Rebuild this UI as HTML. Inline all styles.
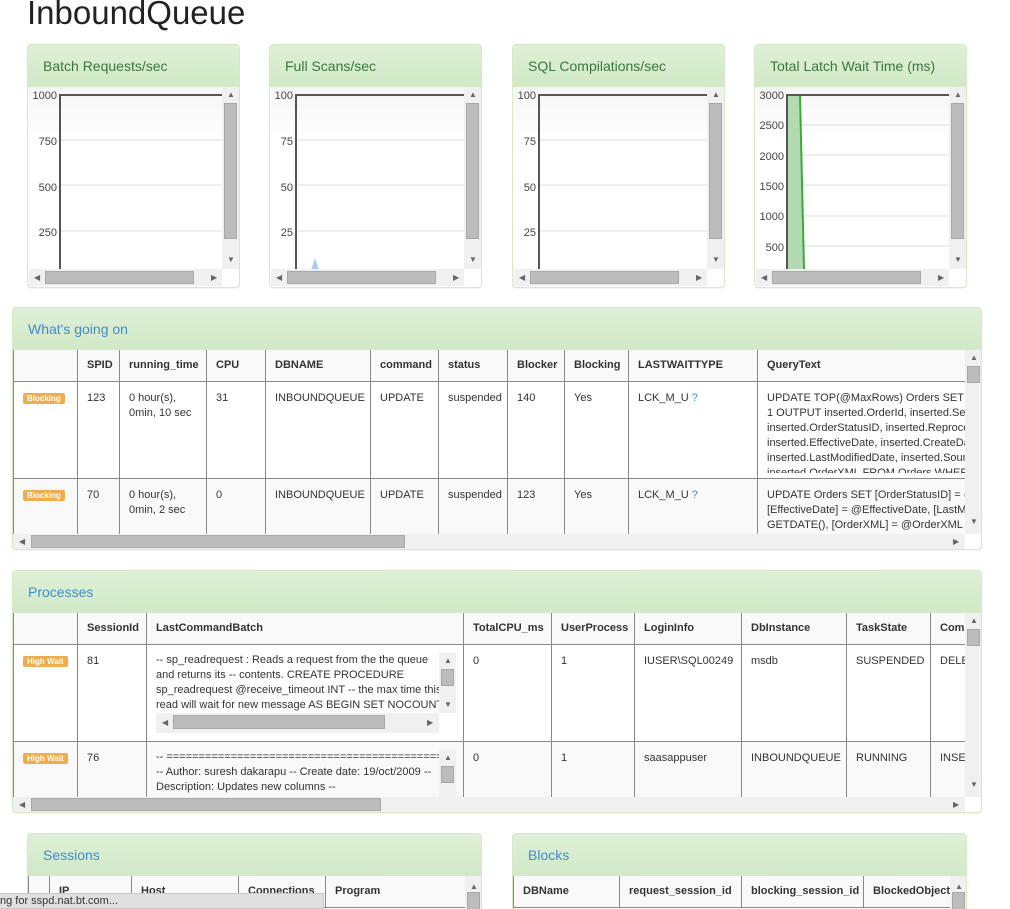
<!DOCTYPE html>
<html><head><meta charset="utf-8">
<style>
*{box-sizing:border-box;margin:0;padding:0}
html{height:909px;overflow:hidden}
body{width:1010px;height:909px;overflow:hidden;background:#fff;font-family:"Liberation Sans",Arial,sans-serif;color:#333;position:relative}
.abs{position:absolute}
h1{position:absolute;left:27px;top:-6px;font-size:33px;font-weight:normal;color:#222}
.panel{position:absolute;border:1px solid #d6e9c6;border-radius:4px;background:#fff;overflow:hidden;box-shadow:0 1px 1px rgba(0,0,0,.05)}
.ph{position:absolute;left:0;right:0;top:0;background:linear-gradient(#dff0d8,#d0e9c6);border-bottom:1px solid #d6e9c6;font-size:14px;padding-left:15px}
.ph.g{color:#3c763d}
.ph.b{color:#428bca}
.sb{position:absolute;background:#f0f0f0}
.th{position:absolute;background:#bcbcbc;border:1px solid #a8a8a8}
.ar{position:absolute;font-size:8px;color:#666;line-height:8px}
table{border-collapse:collapse;table-layout:fixed;font-size:11px;position:absolute;left:0;top:-1px}
td,th{border:1px solid #888;padding:0 9px;vertical-align:top;text-align:left;overflow:hidden;white-space:normal;line-height:15px}
th{font-weight:bold;height:32px;vertical-align:middle;background:#f9f9f9}
tr.r1 td{background:#fff;padding-top:9px}
tr.r2 td{background:#f9f9f9;padding-top:9px}
.lbl{display:inline-block;background:#f0ad4e;color:#fff;font-size:8px;font-weight:bold;padding:1px 4px;border-radius:2px;line-height:9px;margin-top:-4px;margin-left:0}
.q{color:#428bca}
</style></head><body>
<h1>InboundQueue</h1>

<div class="panel" style="left:27px;top:44px;width:213px;height:244px">
 <div class="ph g" style="height:42px;line-height:42px">Batch Requests/sec</div>
 <svg class="abs" style="left:1px;top:42px" width="194" height="183">
  <defs><linearGradient id="bg" x1="0" y1="0" x2="0" y2="1"><stop offset="0" stop-color="#f5f5f5"/><stop offset=".3" stop-color="#fff"/></linearGradient></defs>
  <rect width="194" height="183" fill="url(#bg)"/>
  <g stroke="#ddd"><line x1="31" y1="98" x2="194" y2="98"/><line x1="31" y1="144" x2="194" y2="144"/><line x1="31" y1="189" x2="194" y2="189"/><line x1="31" y1="53" x2="194" y2="53"/></g>
  <path d="M31 183V8H194" fill="none" stroke="#555" stroke-width="2"/>
  <g font-size="11" fill="#444" text-anchor="end" font-family="Liberation Sans"><text x="28" y="12">1000</text><text x="28" y="58">750</text><text x="28" y="104">500</text><text x="28" y="149">250</text></g>
 </svg>
</div>
<div class="panel" style="left:269px;top:44px;width:213px;height:244px">
 <div class="ph g" style="height:42px;line-height:42px">Full Scans/sec</div>
 <svg class="abs" style="left:1px;top:42px" width="194" height="183">
  <rect width="194" height="183" fill="url(#bg)"/>
  <g stroke="#ddd"><line x1="25" y1="53" x2="194" y2="53"/><line x1="25" y1="98" x2="194" y2="98"/><line x1="25" y1="144" x2="194" y2="144"/><line x1="25" y1="189" x2="194" y2="189"/></g>
  <path d="M25 183V8H194" fill="none" stroke="#555" stroke-width="2"/>
  <path d="M40 183L44 171L48 183Z" fill="#a9cff0"/>
  <g font-size="11" fill="#444" text-anchor="end" font-family="Liberation Sans"><text x="22" y="12">100</text><text x="22" y="58">75</text><text x="22" y="104">50</text><text x="22" y="149">25</text></g>
 </svg>
</div>
<div class="panel" style="left:512px;top:44px;width:213px;height:244px">
 <div class="ph g" style="height:42px;line-height:42px">SQL Compilations/sec</div>
 <svg class="abs" style="left:1px;top:42px" width="194" height="183">
  <rect width="194" height="183" fill="url(#bg)"/>
  <g stroke="#ddd"><line x1="25" y1="53" x2="194" y2="53"/><line x1="25" y1="98" x2="194" y2="98"/><line x1="25" y1="144" x2="194" y2="144"/></g>
  <path d="M25 183V8H194" fill="none" stroke="#555" stroke-width="2"/>
  <g font-size="11" fill="#444" text-anchor="end" font-family="Liberation Sans"><text x="22" y="12">100</text><text x="22" y="58">75</text><text x="22" y="104">50</text><text x="22" y="149">25</text></g>
 </svg>
</div>
<div class="panel" style="left:754px;top:44px;width:213px;height:244px">
 <div class="ph g" style="height:42px;line-height:42px">Total Latch Wait Time (ms)</div>
 <svg class="abs" style="left:1px;top:42px" width="194" height="183">
  <rect width="194" height="183" fill="url(#bg)"/>
  <g stroke="#ddd"><line x1="31" y1="38" x2="194" y2="38"/><line x1="31" y1="68" x2="194" y2="68"/><line x1="31" y1="98" x2="194" y2="98"/><line x1="31" y1="129" x2="194" y2="129"/><line x1="31" y1="159" x2="194" y2="159"/></g>
  <path d="M31 8H44L48 183H31Z" fill="#b3dab3"/>
  <path d="M44 8L48 183" stroke="#3aaa3a" stroke-width="2"/>
  <path d="M31 183V8H194" fill="none" stroke="#555" stroke-width="2"/>
  <g font-size="11" fill="#444" text-anchor="end" font-family="Liberation Sans"><text x="28" y="12">3000</text><text x="28" y="42">2500</text><text x="28" y="73">2000</text><text x="28" y="103">1500</text><text x="28" y="133">1000</text><text x="28" y="164">500</text></g>
 </svg>
</div>

<div id="cs"></div>
<script>
var xs=[27,269,512,754];
var h='';
xs.forEach(function(x){
 h+='<div class="sb" style="left:'+(x+195)+'px;top:87px;width:17px;height:182px"></div>';
 h+='<div class="th" style="left:'+(x+197)+'px;top:103px;width:13px;height:136px"></div>';
 h+='<div class="ar" style="left:'+(x+200)+'px;top:91px">&#9650;</div>';
 h+='<div class="ar" style="left:'+(x+200)+'px;top:256px">&#9660;</div>';
 h+='<div class="sb" style="left:'+(x+2)+'px;top:269px;width:193px;height:17px"></div>';
 h+='<div class="th" style="left:'+(x+18)+'px;top:271px;width:149px;height:13px"></div>';
 h+='<div class="ar" style="left:'+(x+7)+'px;top:274px">&#9664;</div>';
 h+='<div class="ar" style="left:'+(x+184)+'px;top:274px">&#9654;</div>';
});
document.getElementById('cs').innerHTML=h;
</script>

<div class="panel" style="left:12px;top:307px;width:970px;height:243px">
 <div class="ph b" style="height:42px;line-height:42px">What's going on</div>
 <div class="abs" style="left:0;top:42px;width:952px;height:184px;overflow:hidden">
 <table style="width:1100px">
  <colgroup><col style="width:64px"><col style="width:42px"><col style="width:87px"><col style="width:59px"><col style="width:105px"><col style="width:68px"><col style="width:69px"><col style="width:57px"><col style="width:64px"><col style="width:129px"><col style="width:356px"></colgroup>
  <tr><th></th><th>SPID</th><th>running_time</th><th>CPU</th><th>DBNAME</th><th>command</th><th>status</th><th>Blocker</th><th>Blocking</th><th>LASTWAITTYPE</th><th>QueryText</th></tr>
  <tr class="r1" style="height:97px"><td><span class="lbl">Blocking</span></td><td>123</td><td>0 hour(s),<br>0min, 10 sec</td><td>31</td><td>INBOUNDQUEUE</td><td>UPDATE</td><td>suspended</td><td>140</td><td>Yes</td><td>LCK_M_U <span class="q">?</span></td><td><div style="height:82px;overflow:hidden">UPDATE TOP(@MaxRows) Orders SET [OrderStatusID] =<br>1 OUTPUT inserted.OrderId, inserted.ServiceId,<br>inserted.OrderStatusID, inserted.ReprocessCount,<br>inserted.EffectiveDate, inserted.CreateDate,<br>inserted.LastModifiedDate, inserted.SourceId,<br>inserted.OrderXML FROM Orders WHERE</div></td></tr>
  <tr class="r2" style="height:97px"><td><span class="lbl">Blocking</span></td><td>70</td><td>0 hour(s),<br>0min, 2 sec</td><td>0</td><td>INBOUNDQUEUE</td><td>UPDATE</td><td>suspended</td><td>123</td><td>Yes</td><td>LCK_M_U <span class="q">?</span></td><td>UPDATE Orders SET [OrderStatusID] = @OrderStatusID,<br>[EffectiveDate] = @EffectiveDate, [LastModifiedDate] =<br>GETDATE(), [OrderXML] = @OrderXML WHERE</td></tr>
 </table>
 </div>
 <div class="sb" style="left:952px;top:42px;width:17px;height:184px"></div>
 <div class="th" style="left:954px;top:58px;width:13px;height:17px"></div>
 <div class="ar" style="left:957px;top:46px">&#9650;</div>
 <div class="ar" style="left:957px;top:210px">&#9660;</div>
 <div class="sb" style="left:0;top:226px;width:952px;height:16px"></div>
 <div class="th" style="left:18px;top:227px;width:374px;height:13px"></div>
 <div class="ar" style="left:6px;top:230px">&#9664;</div>
 <div class="ar" style="left:940px;top:230px">&#9654;</div>
</div>

<div class="panel" style="left:12px;top:570px;width:970px;height:243px">
 <div class="ph b" style="height:42px;line-height:42px">Processes</div>
 <div class="abs" style="left:0;top:42px;width:952px;height:184px;overflow:hidden">
 <table style="width:1100px">
  <colgroup><col style="width:64px"><col style="width:69px"><col style="width:317px"><col style="width:88px"><col style="width:83px"><col style="width:107px"><col style="width:105px"><col style="width:84px"><col style="width:183px"></colgroup>
  <tr><th></th><th>SessionId</th><th>LastCommandBatch</th><th>TotalCPU_ms</th><th>UserProcess</th><th>LoginInfo</th><th>DbInstance</th><th>TaskState</th><th>Command</th></tr>
  <tr class="r1" style="height:97px"><td><span class="lbl">High Wait</span></td><td>81</td><td style="padding:0"></td><td>0</td><td>1</td><td>IUSER\SQL00249</td><td>msdb</td><td>SUSPENDED</td><td>DELETE</td></tr>
  <tr class="r2" style="height:97px"><td><span class="lbl">High Wait</span></td><td>76</td><td style="padding:0"></td><td>0</td><td>1</td><td>saasappuser</td><td>INBOUNDQUEUE</td><td>RUNNING</td><td>INSERT</td></tr>
 </table>
 <div class="abs" style="left:143px;top:40px;width:300px;height:81px;font-size:11px;line-height:15px;overflow:hidden">
  <div class="abs" style="left:0;top:0;width:283px;height:60px;overflow:hidden;background:#fff;white-space:nowrap">-- sp_readrequest : Reads a request from the the queue<br>and returns its -- contents. CREATE PROCEDURE<br>sp_readrequest @receive_timeout INT -- the max time this<br>read will wait for new message AS BEGIN SET NOCOUNT</div>
  <div class="sb" style="left:283px;top:0;width:17px;height:60px"></div>
  <div class="th" style="left:285px;top:16px;width:13px;height:17px"></div>
  <div class="ar" style="left:288px;top:4px">&#9650;</div>
  <div class="ar" style="left:288px;top:48px">&#9660;</div>
  <div class="sb" style="left:0;top:60px;width:283px;height:20px"></div>
  <div class="th" style="left:17px;top:62px;width:212px;height:14px"></div>
  <div class="ar" style="left:6px;top:66px">&#9664;</div>
  <div class="ar" style="left:271px;top:66px">&#9654;</div>
 </div>
 <div class="abs" style="left:143px;top:137px;width:300px;height:47px;font-size:11px;line-height:15px;overflow:hidden">
  <div class="abs" style="left:0;top:0;width:283px;height:60px;overflow:hidden;background:#f9f9f9;white-space:nowrap">-- ===============================================<br>-- Author: suresh dakarapu -- Create date: 19/oct/2009 --<br>Description: Updates new columns --</div>
  <div class="sb" style="left:283px;top:0;width:17px;height:60px"></div>
  <div class="th" style="left:285px;top:16px;width:13px;height:17px"></div>
  <div class="ar" style="left:288px;top:4px">&#9650;</div>
 </div>
 </div>
 <div class="sb" style="left:952px;top:42px;width:17px;height:184px"></div>
 <div class="th" style="left:954px;top:58px;width:13px;height:17px"></div>
 <div class="ar" style="left:957px;top:46px">&#9650;</div>
 <div class="ar" style="left:957px;top:210px">&#9660;</div>
 <div class="sb" style="left:0;top:226px;width:952px;height:16px"></div>
 <div class="th" style="left:18px;top:227px;width:350px;height:13px"></div>
 <div class="ar" style="left:6px;top:230px">&#9664;</div>
 <div class="ar" style="left:940px;top:230px">&#9654;</div>
</div>

<div class="panel" style="left:27px;top:833px;width:455px;height:80px">
 <div class="ph b" style="height:42px;line-height:42px">Sessions</div>
 <div class="abs" style="left:0;top:42px;width:437px;height:40px;overflow:hidden">
 <table style="width:440px">
  <colgroup><col style="width:21px"><col style="width:82px"><col style="width:107px"><col style="width:87px"><col style="width:143px"></colgroup>
  <tr><th></th><th>IP</th><th>Host</th><th>Connections</th><th>Program</th></tr>
 </table>
 </div>
 <div class="sb" style="left:437px;top:42px;width:17px;height:40px"></div>
 <div class="th" style="left:439px;top:58px;width:13px;height:30px"></div>
 <div class="ar" style="left:442px;top:49px">&#9650;</div>
</div>
<div class="panel" style="left:512px;top:833px;width:455px;height:80px">
 <div class="ph b" style="height:42px;line-height:42px">Blocks</div>
 <div class="abs" style="left:0;top:42px;width:437px;height:40px;overflow:hidden">
 <table style="width:520px">
  <colgroup><col style="width:106px"><col style="width:122px"><col style="width:122px"><col style="width:170px"></colgroup>
  <tr><th>DBName</th><th>request_session_id</th><th>blocking_session_id</th><th>BlockedObjectName</th></tr>
 </table>
 </div>
 <div class="sb" style="left:437px;top:42px;width:17px;height:40px"></div>
 <div class="th" style="left:439px;top:58px;width:13px;height:30px"></div>
 <div class="ar" style="left:442px;top:49px">&#9650;</div>
</div>

<div class="abs" style="left:0;top:893px;width:324px;height:16px;background:#e0e0e0;border:1px solid #c8c8c8;border-left:none;font-size:11px;line-height:15px;color:#333;white-space:nowrap;overflow:hidden">ng for sspd.nat.bt.com...</div>
</body></html>
